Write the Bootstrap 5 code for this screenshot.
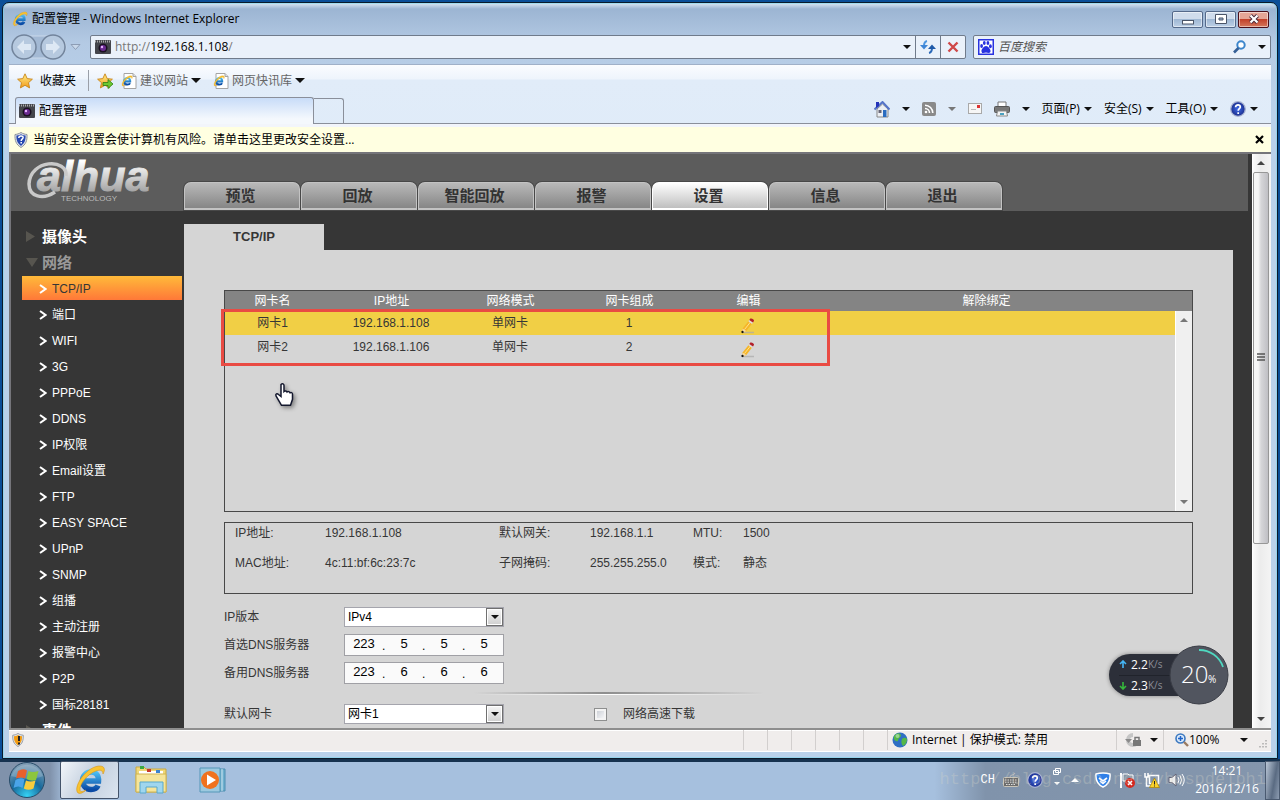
<!DOCTYPE html>
<html lang="zh-CN">
<head>
<meta charset="utf-8">
<meta name="viewport" content="width=device-width, initial-scale=1">
<title>配置管理 - Windows Internet Explorer</title>
<link href="https://cdn.jsdelivr.net/npm/bootstrap@5.3.0/dist/css/bootstrap.min.css" rel="stylesheet">
<style>
:root{--ui:"Open Sans","Noto Sans CJK SC",sans-serif;--web:"Liberation Sans","Noto Sans CJK SC",sans-serif}
body{height:100vh;min-height:600px;background:#0a4e98;font:12px/18px var(--ui);color:#000;overflow:hidden}
button{border:0;background:none;padding:0;color:inherit;font:inherit;white-space:nowrap}
a{color:inherit;text-decoration:none}
svg{display:block;flex:none}
input,select{font:inherit;color:inherit;min-width:0}
ul,dl,dd,dt{margin:0;padding:0;list-style:none;font-weight:400}
/* window chrome */
.win{min-height:0;margin:2px 2px 0;border:1px solid #0b1a2a;border-radius:7px 7px 0 0;padding:0 6px 6px;background:linear-gradient(#dbe7f4 0,#9cb5d3 6px,#b4cae4 40px,#b9d1ea 100px);box-shadow:inset 0 0 0 1px #6fd6ee80}
.titlebar{height:33px;padding:0 2px 0 3px}
.winbtns{gap:2px}
.winbtn{width:31px;height:17px;border:1px solid #54698a;border-radius:2px;background:linear-gradient(#cfdcec 45%,#9fb8d4 50%,#bdd0e6);box-shadow:inset 0 0 0 1px #ffffff80}
.winbtn.closer{border-color:#4b0f1a;background:linear-gradient(#e5a596 45%,#c2412a 50%,#d4775c)}
.addr{height:24px;margin-bottom:5px;gap:7px}
.field{height:24px;border:1px solid #707b8b;background:#eaf1fa;border-radius:2px}
.field input{border:0;background:none;outline:0;padding:0}
.field input::placeholder{color:#555;font-style:italic;opacity:1}
.search{width:298px}
.grey{color:#777}
.fieldbtn{width:25px;height:22px;border-left:1px solid #707b8b}
.arrow{width:0;height:0;border:5px solid transparent;border-top-color:#111;border-bottom:0;flex:none}
.arrow.sm{border-width:4px 4px 0}
.arrow.dim{border-top-color:#777}
.bars{background:linear-gradient(#fafcff 0,#eef4fc 14px,#e1ecf9 15px,#dfebf8 100%);border-top:1px solid #9fb0c8}
.favs{height:31px;padding-left:8px;gap:8px;color:#666}
.favs button{display:flex;align-items:center;gap:3px}
.vline{width:1px;height:21px;background:#9a9fa8;margin-left:4px}
.tabs{height:28px;border-bottom:1px solid #8a8f9a;padding-left:6px}
.pagetab{width:299px;height:27px;border:1px solid #8a8f9a;border-bottom:0;border-radius:3px 3px 0 0;background:linear-gradient(#c8dcf8,#f4f8fd 80%);padding-left:3px;margin-bottom:-1px}
.newtab{width:30px;height:25px;border:1px solid #8a8f9a;border-left:0;border-bottom:0;border-radius:0 3px 0 0}
.cmds{gap:12px;padding:0 13px 5px 0}
.infobar{height:28px;border-top:3px solid #f2f5fb;background:#ffffe1;padding:0 7px 0 4px}
/* camera web page */
.web{border:solid #75757a;border-width:2px 0 0 2px;background:#363636;font:12px/18px var(--web);color:#363636;overflow:hidden;min-height:0}
.head{background:#5c5c5c;height:57px;padding:0 0 1px 13px;margin-right:4px}
.brand{width:160px}
.brand svg{overflow:visible}
.maintab{width:116px;height:28px;margin-right:1px;padding-right:3px;border:1px solid #c3c3c3;border-bottom-width:2px;border-radius:7px 7px 0 0;background:linear-gradient(#b9b9b9,#868686);font-size:15px;font-weight:700;color:#333;box-shadow:0 0 0 1px #484848}
.maintab.current{background:linear-gradient(#fff,#bfbfbf);border-color:#fff}
.side{width:173px;flex:none;padding:13px 2px 0 11px;color:#fff}
.side li a{display:flex;align-items:center;height:24px;margin-bottom:2px;padding:1px 0 0 17px;gap:5px}
.side li.group a{font-size:15px;font-weight:700;padding-left:4px;gap:6px}
.side li.group svg{width:10px}
.side li.group.open a{color:#999}
.side li.current a{background:linear-gradient(#ffba3a,#ff7838);color:#363636}
.sub{padding-top:13px}
.subtab{width:140px;height:26px;background:#d5d5d5;font-size:13px;font-weight:700}
.panel{background:#d5d5d5;margin-right:19px;padding:40px 40px 0}
.boxed{border:1px solid #484848}
.nics{width:100%;table-layout:fixed;text-align:center}
.nics col{width:119px}
.nics .c1{width:107px}.nics .c6{width:auto}.nics .c7{width:17px}
.nics th{background:#848484;color:#fff;font-weight:400;height:20px;line-height:20px;padding:0}
.nics td{height:24px;line-height:24px;padding:0 1px 0 0;vertical-align:top}
.nics th:first-child,.nics td:first-child{padding-right:12px}
.nics th.last{padding-right:10px}
.nics tr.on td{background:#f1cf45}
.nics tr.rest td{height:152px}
.nics td button{display:block;margin:0 auto;padding-top:5px;height:24px}
.nics td.bar,.nics tr.on td.bar{background:#f0f0f0;padding:0;border-left:1px solid #fff;height:200px}
.bar>div{height:200px;padding:7px 0}
.redbox{left:-4px;top:18px;width:609px;height:57px;border:3px solid #e94b43;pointer-events:none}
.hand{left:49px;top:91px;filter:drop-shadow(2px 2px 2px #0006)}
.details{grid-template-columns:90px 174px 91px 103px 50px 1fr;row-gap:12px;padding:1px 10px 21px;margin:10px 0 12px}
.row-line{display:flex;height:22px;align-items:center;margin-bottom:6px}
.row-line>label:first-child{width:120px}
.pick{width:160px;height:20px;background:#fff;border:1px solid #a5a5ad;color:#000}
.pick select{appearance:none;border:0;background:none;padding:0 3px;outline:0;flex:1}
.pick .drop{width:17px;border:1px solid #707070;background:linear-gradient(#f6f6f6,#cfcfcf);box-shadow:inset 0 0 0 1px #fff}
.ipbox{width:160px;height:22px;border:1px solid #a0a0a5;background:#fafafa;color:#000;padding:0 1px}
.ipbox input{width:36px;height:18px;border:0;background:none;padding:0;text-align:center;font-size:13px;outline:0}
.ipbox span{width:4px;line-height:22px}
.fade-line{width:290px;height:3px;margin:8px 0 8px 250px;background:linear-gradient(90deg,transparent,#8e8e8e 45%,transparent) top/100% 2px no-repeat,linear-gradient(90deg,transparent,#fff 45%,transparent) bottom/100% 1px no-repeat}
.tick{appearance:none;width:13px;height:13px;border:1px solid #8e8f8f;background:linear-gradient(135deg,#c3c8cf,#fff);box-shadow:inset 0 0 0 2px #f4f4f4;margin:0 0 0 90px}
.sbar{width:19px;padding-right:2px;background:linear-gradient(90deg,#fafafa,#ececec 40%,#f4f4f4);border-left:1px solid #fff;flex:none}
.sbar .thumb{flex:374;border:1px solid #979797;border-radius:2px;background:linear-gradient(90deg,#f6f6f6 0 30%,#d6d6d9 50%,#bfbfc4)}
.sbar .room{flex:168}
.sbar button{height:18px}
.up{width:0;height:0;border:4px solid transparent;border-bottom-color:#444;border-top:0}
.down{width:0;height:0;border:4px solid transparent;border-top-color:#444;border-bottom:0}
.up.light{border-bottom-color:#fff}
.faint{opacity:.7}
.meter{right:42px;bottom:23px;font-family:"Open Sans",sans-serif;color:#fff}
.pill{width:80px;height:42px;border-radius:21px 0 0 21px;background:#2c2f39;margin-right:-20px;padding-left:10px;line-height:21px;font-size:12px;box-shadow:0 0 4px #0006}
.pill div{height:21px}
.pill div+div{border-top:1px solid #20232b}
.pill small{color:#8b8e97;font-size:10px}
.dial{width:60px;height:60px}
/* status bar */
.status{height:25px;border-top:2px solid #8e8e8e;box-shadow:inset 0 1px #fff;background:#f0edec;padding-left:3px;border-bottom:1px solid #fff}
.seg{border-left:1px solid #d2cfce;height:20px;width:24px}
.seg.zone{width:229px}.seg.lock{width:47px}.seg.zoom{width:108px;padding-left:11px}
/* taskbar */
.taskbar{height:42px;padding-top:2px;background:linear-gradient(90deg,#8092ab 0 50px,#a6c0de 66px,#a6c0de 73%,#8093ab 77%,#8496ad);background-clip:content-box;box-shadow:inset 0 3px #16324f;color:#fff}
.orb{padding:0 14px 0 8px}
.iebtn{width:59px;height:38px;border:1px solid #43536a;border-radius:2px;background:linear-gradient(120deg,#f2f6fa,#c3cfde 50%,#dbe5f0);margin-right:16px}
.media{margin-left:31px}
.ch{font-family:"Liberation Mono",monospace}
.peek{width:15px;border:1px solid #4a5a70;background:linear-gradient(100deg,#b9c6d6,#5a6b82 60%,#8c9cb1)}
.stamp{right:14px;bottom:7px;font:17px/26px "Liberation Mono",monospace;color:#d4d4c850;pointer-events:none;white-space:nowrap}
.clock{width:76px;line-height:18px;text-align:center}
</style>
</head>
<body class="d-flex flex-column">
<svg width="0" height="0" class="position-absolute" aria-hidden="true">
<defs>
<linearGradient id="gBlue" x1="0" y1="0" x2="0" y2="1"><stop offset="0" stop-color="#4cc0f5"/><stop offset="1" stop-color="#0a4aa5"/></linearGradient>
<linearGradient id="gStar" x1="0" y1="0" x2="0" y2="1"><stop offset="0" stop-color="#fff08a"/><stop offset="1" stop-color="#f29a1a"/></linearGradient>
<linearGradient id="gLogo" x1="0" y1="0" x2="0" y2="1"><stop offset=".2" stop-color="#fff"/><stop offset=".8" stop-color="#a8a8a8"/></linearGradient>
<radialGradient id="gHelp"><stop offset="0" stop-color="#3f6be8"/><stop offset="1" stop-color="#1a2d8c"/></radialGradient>
<radialGradient id="gOrb" cx=".5" cy=".95" r=".9"><stop offset="0" stop-color="#35d2f5"/><stop offset=".5" stop-color="#176a9c"/><stop offset="1" stop-color="#7f9db5"/></radialGradient>
<symbol id="ie" viewBox="0 0 32 32"><path d="M9.500 17h15c.5-6-3-9-7.500-9s-8.500 3.500-8.500 8.500 3.500 9 8.500 9c3.500 0 6-1.500 7-4" fill="none" stroke="url(#gBlue)" stroke-width="5.500"/><path d="M4 29C0 25 6 13 14 7 21 1 29 1 30 4c1 2 0 4-1 6 0-3-2-5-7-3C13 10 5 21 6 26c0 2 3 2 6 0-3 3-6 4-8 3z" fill="#f7c331" stroke="#d9951a" stroke-width=".6"/></symbol>
<symbol id="cam" viewBox="0 0 16 14"><rect width="16" height="14" rx="1" fill="#44454b"/><path d="M0 1.500h16" stroke="#aaa" stroke-width="2" stroke-dasharray="1 1"/><circle cx="8" cy="8" r="4.500" fill="#1a1020"/><circle cx="8" cy="8" r="3" fill="#6a2a90"/><circle cx="7" cy="7" r="1.200" fill="#e6b4ff"/></symbol>
<symbol id="star" viewBox="0 0 16 16"><path d="M8 .800l2.200 4.800 5.200.600-3.900 3.500 1.100 5.200L8 12.300l-4.600 2.600 1.100-5.200L.600 6.200l5.200-.600z" fill="url(#gStar)" stroke="#c8841a" stroke-width=".9"/></symbol>
<symbol id="iepage" viewBox="0 0 16 16"><path d="M3 .500h9l3 3v12H3z" fill="#fff" stroke="#a4a4a4"/><path d="M12 .500v3h3" fill="#ddd" stroke="#a4a4a4"/><use href="#ie" x="0" y="2" width="12" height="12"/></symbol>
<symbol id="help" viewBox="0 0 16 16"><circle cx="8" cy="8" r="7.300" fill="url(#gHelp)" stroke="#a9b3d2" stroke-width="1.300"/><path d="M5.600 6.300c0-3.300 5-3 4.700-.200C10.100 7.600 8.200 7.700 8.200 9.800M8.200 11.200v1.800" fill="none" stroke="#fff" stroke-width="1.700"/></symbol>
<symbol id="shield" viewBox="0 0 16 16"><path d="M8 .500c2 1.300 4 1.800 6 2 .300 6-1 10-6 13-5-3-6.300-7-6-13 2-.200 4-.700 6-2z" fill="#dfe3ea" stroke="#8d939c"/><path d="M8 2.200c1.500.900 3 1.300 4.600 1.400.100 5-1 7.800-4.600 10.300C4.400 11.400 3.300 8.600 3.400 3.600 5 3.500 6.500 3.100 8 2.200z" fill="currentColor"/></symbol>
<symbol id="chev" viewBox="0 0 8 10"><path d="M1 1l5.500 4L1 9" fill="none" stroke="currentColor" stroke-width="2"/></symbol>
<symbol id="pencil" viewBox="0 0 14 16"><path d="M2 14.500h11" stroke="#aaa" stroke-width="1.500" opacity=".7"/><path d="M1.500 10.500l6.500-8 3.500 2.500-6.200 8-4 1.700z" fill="#f5b52a"/><path d="M3.500 11.500l6-7.500" stroke="#ffe38a"/><path d="M1.500 10.500l3.800 2.500-4 1.700z" fill="#f3d9a8"/><path d="M1 13l1.500 1-1.500.900z" fill="#111" stroke="#111"/><path d="M7.300 3.300l1-1.300 3.700 2.500-1 1.400z" fill="#ddd"/><path d="M8.300 2l1-1.400c1.500-.800 4 .800 3.700 2.200L12 4.500z" fill="#b3202a"/></symbol>
</defs>
</svg>

<div class="win d-flex flex-column flex-grow-1">
  <header class="titlebar d-flex align-items-center">
    <svg width="16" height="16"><use href="#ie"/></svg>
    <span class="ms-1 flex-grow-1">配置管理 - Windows Internet Explorer</span>
    <div class="winbtns d-flex">
      <button class="winbtn d-flex justify-content-center align-items-center" aria-label="最小化"><svg width="12" height="12"><rect x=".5" y="7.500" width="11" height="3.500" fill="#fff" stroke="#4a5568"/></svg></button>
      <button class="winbtn d-flex justify-content-center align-items-center" aria-label="还原"><svg width="12" height="12"><path d="M.5 1.500h11v9H.5z" fill="#fff" stroke="#4a5568"/><path d="M4 5h4v2H4z" fill="#9fb8d4" stroke="#4a5568"/></svg></button>
      <button class="winbtn closer d-flex justify-content-center align-items-center" aria-label="关闭"><svg width="12" height="12"><path d="M2.500 2.500l7 7m0-7l-7 7" stroke="#4a2a3a" stroke-width="4"/><path d="M2.500 2.500l7 7m0-7l-7 7" stroke="#fff" stroke-width="2.200"/></svg></button>
    </div>
  </header>

  <div class="addr d-flex align-items-center">
    <svg width="74" height="28" viewBox="0 0 74 28"><rect x="5" y="3" width="52" height="22" rx="11" fill="#a3b9d4" stroke="#c9d8ea"/><g fill="#b6c9df" stroke="#72849c" stroke-width="1.500"><circle cx="15" cy="14" r="12"/><circle cx="44" cy="14" r="12"/></g><g fill="#dde8f4"><path d="M8 14l7-7v4h7v6h-7v4zM51 14l-7-7v4h-7v6h7v4z"/></g><path d="M62 11.500h9l-4.500 5z" fill="#c9d8ea" stroke="#8d9db5"/></svg>
    <div class="field d-flex align-items-center flex-grow-1 ps-1">
      <svg width="16" height="14" class="me-1"><use href="#cam"/></svg>
      <a href="#" class="flex-grow-1"><span class="grey">http://</span>192.168.1.108<span class="grey">/</span></a>
      <i class="arrow sm me-1"></i>
      <button class="fieldbtn d-flex justify-content-center align-items-center" aria-label="刷新"><svg width="16" height="16"><path d="M7 2C4.500 2.500 4 4 4 7" fill="none" stroke="#4d95e0" stroke-width="2"/><path d="M0 6h8l-4 4.500z" fill="#3f86d6"/><path d="M9 14c2.500-.5 3-2 3-5" fill="none" stroke="#2c69b8" stroke-width="2"/><path d="M8 10h8l-4-4.500z" fill="#205aa8"/></svg></button>
      <button class="fieldbtn d-flex justify-content-center align-items-center" aria-label="停止"><svg width="12" height="12"><path d="M1.500 1.500l9 9m0-9l-9 9" stroke="#cf4848" stroke-width="2.400"/></svg></button>
    </div>
    <div class="field search d-flex align-items-center ps-1">
      <svg width="16" height="16" class="me-1"><rect x=".75" y=".75" width="14.500" height="14.500" fill="#fff" stroke="#2832e0" stroke-width="1.500"/><g fill="#2832e0"><ellipse cx="3.600" cy="7" rx="1.400" ry="2"/><ellipse cx="6.300" cy="4" rx="1.400" ry="2"/><ellipse cx="9.900" cy="4" rx="1.400" ry="2"/><ellipse cx="12.400" cy="7.200" rx="1.400" ry="2"/><path d="M8 7c2 0 5 3.500 4.500 5.500S10 14 8 13.500C6 14 4 14.500 3.500 12.500S6 7 8 7z"/></g></svg>
      <input type="text" class="flex-grow-1" placeholder="百度搜索" aria-label="百度搜索">
      <svg width="14" height="14" class="me-2"><circle cx="9" cy="5" r="3.700" fill="#fff" stroke="#3c86cc" stroke-width="2"/><path d="M6.500 8L2 12.500" stroke="#355f96" stroke-width="2.600"/></svg>
      <i class="arrow sm mx-1"></i>
    </div>
  </div>

  <div class="bars">
    <nav class="favs d-flex align-items-center">
      <button class="text-black"><svg width="16" height="16"><use href="#star"/></svg><span class="ms-1">收藏夹</span></button>
      <span class="vline"></span>
      <button aria-label="添加到收藏夹栏"><svg width="16" height="16"><use href="#star"/><path d="M6 9.500h5v-3l5 4.500-5 4.500v-3H6z" fill="#6cc832" stroke="#2d7d12" stroke-width=".8"/></svg></button>
      <button class="me-1"><svg width="16" height="16"><use href="#iepage"/></svg>建议网站 <i class="arrow"></i></button>
      <button><svg width="16" height="16"><use href="#iepage"/></svg>网页快讯库 <i class="arrow"></i></button>
    </nav>
    <div class="tabs d-flex align-items-end">
      <button class="pagetab d-flex align-items-center gap-1"><svg width="16" height="14"><use href="#cam"/></svg>配置管理</button>
      <button class="newtab" aria-label="新选项卡"></button>
      <div class="cmds d-flex align-items-center ms-auto">
        <svg width="16" height="17"><path d="M3 8v8h11V8L8.500 3z" fill="#eceff4" stroke="#888"/><path d="M.5 8.500L8.500 1l7 7.500" fill="none" stroke="#5674c8" stroke-width="2"/><path d="M2 1h3v4L2 7z" fill="#2433b8"/><path d="M9 9h3.500v7H9z" fill="#2a6cc0"/><path d="M4.500 9h3v3h-3z" fill="#667"/></svg>
        <i class="arrow sm"></i>
        <svg width="14" height="14"><rect width="14" height="14" rx="2" fill="#8a8a8a"/><g fill="none" stroke="#fff" stroke-width="1.600"><path d="M3 6.500A4.500 4.500 0 017.500 11M3 3.200A7.800 7.800 0 0110.800 11"/></g><circle cx="4" cy="10" r="1.300" fill="#fff"/></svg>
        <i class="arrow sm dim"></i>
        <svg width="14" height="12"><rect x=".5" y=".5" width="13" height="10" fill="#f6f6f6" stroke="#a9a9a9"/><rect x="9" y="2" width="3" height="3" fill="#d33"/><path d="M3 6.500h5" stroke="#bbb"/></svg>
        <svg width="16" height="16"><path d="M4 1h8v5H4z" fill="#fff" stroke="#777"/><rect x=".5" y="5.500" width="15" height="6" rx="1" fill="#777" stroke="#555"/><path d="M3.500 10h9l1 5h-11z" fill="#f4f4f4" stroke="#888"/><path d="M6 12h4v2H6z" fill="#49a0c0"/></svg>
        <i class="arrow sm"></i>
        <button class="d-flex align-items-center gap-1">页面(P) <i class="arrow sm"></i></button>
        <button class="d-flex align-items-center gap-1">安全(S) <i class="arrow sm"></i></button>
        <button class="d-flex align-items-center gap-1">工具(O) <i class="arrow sm"></i></button>
        <button class="d-flex align-items-center gap-1" aria-label="帮助"><svg width="16" height="16"><use href="#help"/></svg><i class="arrow sm"></i></button>
      </div>
    </div>
    <div class="infobar d-flex align-items-center">
      <svg width="16" height="16" class="me-1" color="#2648b0"><use href="#shield"/><path d="M5.800 6c.200-3 4.600-2.500 4.300-.2C10 7 8.200 7 8.200 9M8.200 10v1.600" fill="none" stroke="#fff" stroke-width="1.500"/></svg>
      <span class="flex-grow-1">当前安全设置会使计算机有风险。请单击这里更改安全设置...</span>
      <button aria-label="关闭信息栏"><svg width="9" height="9"><path d="M1 1l7 7m0-7l-7 7" stroke="#000" stroke-width="2.200"/></svg></button>
    </div>
  </div>

  <div class="web d-flex flex-grow-1 position-relative">
    <div class="flex-grow-1 overflow-hidden">
      <div class="head d-flex">
        <a href="#" class="brand" aria-label="alhua TECHNOLOGY">
          <svg width="136" height="54"><text x="13" y="37" font-family="Liberation Sans" font-style="italic" font-weight="700" font-size="43" fill="url(#gLogo)" stroke="url(#gLogo)">alhua</text><path d="M42 22C44 4 6 5 5 30c0 13 14 16 26 8" fill="none" stroke="#c9c9c9" stroke-width="3.500"/><text x="37" y="47" font-family="Liberation Sans" font-size="8" fill="#bbb">TECHNOLOGY</text></svg>
        </a>
        <nav class="d-flex align-items-end">
          <button class="maintab">预览</button><button class="maintab">回放</button><button class="maintab">智能回放</button><button class="maintab">报警</button><button class="maintab current">设置</button><button class="maintab">信息</button><button class="maintab">退出</button>
        </nav>
      </div>
      <div class="d-flex">
        <ul class="side">
          <li class="group"><a href="#"><svg width="10" height="11"><path d="M0 0l9 5.500L0 11z" fill="#57554f"/></svg>摄像头</a></li>
          <li class="group open"><a href="#"><svg width="10" height="9" overflow="visible"><path d="M0 0h12L6 9z" fill="#57554f"/></svg>网络</a></li>
          <li class="current"><a href="#"><svg width="8" height="10" color="#fff"><use href="#chev"/></svg>TCP/IP</a></li>
          <li><a href="#"><svg width="8" height="10"><use href="#chev"/></svg>端口</a></li>
          <li><a href="#"><svg width="8" height="10"><use href="#chev"/></svg>WIFI</a></li>
          <li><a href="#"><svg width="8" height="10"><use href="#chev"/></svg>3G</a></li>
          <li><a href="#"><svg width="8" height="10"><use href="#chev"/></svg>PPPoE</a></li>
          <li><a href="#"><svg width="8" height="10"><use href="#chev"/></svg>DDNS</a></li>
          <li><a href="#"><svg width="8" height="10"><use href="#chev"/></svg>IP权限</a></li>
          <li><a href="#"><svg width="8" height="10"><use href="#chev"/></svg>Email设置</a></li>
          <li><a href="#"><svg width="8" height="10"><use href="#chev"/></svg>FTP</a></li>
          <li><a href="#"><svg width="8" height="10"><use href="#chev"/></svg>EASY SPACE</a></li>
          <li><a href="#"><svg width="8" height="10"><use href="#chev"/></svg>UPnP</a></li>
          <li><a href="#"><svg width="8" height="10"><use href="#chev"/></svg>SNMP</a></li>
          <li><a href="#"><svg width="8" height="10"><use href="#chev"/></svg>组播</a></li>
          <li><a href="#"><svg width="8" height="10"><use href="#chev"/></svg>主动注册</a></li>
          <li><a href="#"><svg width="8" height="10"><use href="#chev"/></svg>报警中心</a></li>
          <li><a href="#"><svg width="8" height="10"><use href="#chev"/></svg>P2P</a></li>
          <li><a href="#"><svg width="8" height="10"><use href="#chev"/></svg>国标28181</a></li>
          <li class="group"><a href="#"><svg width="10" height="11"><path d="M0 0l9 5.500L0 11z" fill="#57554f"/></svg>事件</a></li>
        </ul>
        <main class="sub flex-grow-1 d-flex flex-column">
          <button class="subtab">TCP/IP</button>
          <div class="panel flex-grow-1">
            <div class="boxed position-relative">
              <table class="nics">
                <colgroup><col class="c1"><col><col><col><col><col class="c6"><col class="c7"></colgroup>
                <thead><tr><th>网卡名</th><th>IP地址</th><th>网络模式</th><th>网卡组成</th><th>编辑</th><th class="last">解除绑定</th><th></th></tr></thead>
                <tbody>
                  <tr class="on"><td>网卡1</td><td>192.168.1.108</td><td>单网卡</td><td>1</td><td><button aria-label="编辑网卡1"><svg width="14" height="16"><use href="#pencil"/></svg></button></td><td></td>
                    <td class="bar" rowspan="3"><div class="d-flex flex-column justify-content-between align-items-center"><i class="up faint"></i><i class="down faint"></i></div></td></tr>
                  <tr><td>网卡2</td><td>192.168.1.106</td><td>单网卡</td><td>2</td><td><button aria-label="编辑网卡2"><svg width="14" height="16"><use href="#pencil"/></svg></button></td><td></td></tr>
                  <tr class="rest"><td colspan="6"></td></tr>
                </tbody>
              </table>
              <div class="redbox position-absolute"></div>
              <svg class="hand position-absolute" width="22" height="26" viewBox="0 0 22 26"><path d="M7 2.500c1.500-1.500 3-.5 3 1v6c1-1 2.500-.5 3 .5 1-1 2.500-.3 3 .8 1.500-.8 2.500.2 2.500 1.500v5l-2 6H7.500L2 14c-.8-2 1-3 2.500-1.500L7 14.500z" fill="#fff" stroke="#14182e" stroke-width="1.500"/></svg>
            </div>
            <dl class="details boxed d-grid">
              <dt>IP地址:</dt><dd>192.168.1.108</dd><dt>默认网关:</dt><dd>192.168.1.1</dd><dt>MTU:</dt><dd>1500</dd>
              <dt>MAC地址:</dt><dd>4c:11:bf:6c:23:7c</dd><dt>子网掩码:</dt><dd>255.255.255.0</dd><dt>模式:</dt><dd>静态</dd>
            </dl>
            <form>
              <div class="row-line"><label for="ver">IP版本</label><div class="pick d-flex"><select id="ver"><option>IPv4</option></select><span class="drop d-flex align-items-center justify-content-center"><i class="arrow sm"></i></span></div></div>
              <div class="row-line"><label for="dns1">首选DNS服务器</label><div class="ipbox d-flex"><input id="dns1" value="223"><span>.</span><input value="5" aria-label="首选DNS第二段"><span>.</span><input value="5" aria-label="首选DNS第三段"><span>.</span><input value="5" aria-label="首选DNS第四段"></div></div>
              <div class="row-line"><label for="dns2">备用DNS服务器</label><div class="ipbox d-flex"><input id="dns2" value="223"><span>.</span><input value="6" aria-label="备用DNS第二段"><span>.</span><input value="6" aria-label="备用DNS第三段"><span>.</span><input value="6" aria-label="备用DNS第四段"></div></div>
              <div class="fade-line"></div>
              <div class="row-line"><label for="nic">默认网卡</label><div class="pick d-flex"><select id="nic"><option>网卡1</option></select><span class="drop d-flex align-items-center justify-content-center"><i class="arrow sm"></i></span></div>
                <input type="checkbox" class="tick" id="fast"><label for="fast" class="ms-3">网络高速下载</label></div>
            </form>
          </div>
        </main>
      </div>
    </div>
    <div class="sbar d-flex flex-column">
      <button class="d-flex justify-content-center align-items-center" aria-label="向上滚动"><i class="up"></i></button>
      <div class="thumb d-flex align-items-center justify-content-center"><svg width="8" height="9"><path d="M0 1h8M0 4h8M0 7h8" stroke="#555" stroke-width="1.500"/></svg></div>
      <div class="room"></div>
      <button class="d-flex justify-content-center align-items-center" aria-label="向下滚动"><i class="down"></i></button>
    </div>
    <div class="meter position-absolute d-flex align-items-center">
      <div class="pill">
        <div class="d-flex align-items-center"><svg width="8" height="8" class="me-1"><path d="M4 8V1M1 4l3-3 3 3" fill="none" stroke="#45b6f5" stroke-width="1.600"/></svg>2.2<small>K/s</small></div>
        <div class="d-flex align-items-center"><svg width="8" height="8" class="me-1"><path d="M4 0v7M1 4l3 3 3-3" fill="none" stroke="#36b93c" stroke-width="1.600"/></svg>2.3<small>K/s</small></div>
      </div>
      <svg class="dial" viewBox="0 0 60 60"><circle cx="30" cy="30" r="29" fill="#51555f" stroke="#3a3d46"/><path d="M30 5a25 25 0 0124 17" fill="none" stroke="#4fd8c0" stroke-width="1.800"/><text x="12" y="38" font-size="24" font-weight="300" fill="#fff" font-family="Open Sans">20</text><text x="39" y="38" font-size="10" fill="#fff" font-family="Open Sans">%</text></svg>
    </div>
  </div>

  <footer class="status d-flex align-items-center">
    <svg width="14" height="16" viewBox="1 0 14 16" class="me-auto" color="#f39c12"><use href="#shield"/><path d="M8 4v5M8 10.500v2" stroke="#222" stroke-width="2"/></svg>
    <span class="seg"></span><span class="seg"></span><span class="seg"></span><span class="seg"></span><span class="seg"></span><span class="seg"></span>
    <span class="seg zone d-flex align-items-center ps-1"><svg width="16" height="16" class="me-1"><circle cx="8" cy="8" r="7.500" fill="#2f6fc4"/><path d="M2 4c3-4 6-3 7-1 0 3-3 3-3 6-3 1-5-2-4-5zM10 7c2-2 4-1 5 0 0 4-2 6-4 7-2-2-2-5-1-7z" fill="#54b848"/><circle cx="5.500" cy="4" r="2" fill="#fff" opacity=".4"/></svg>Internet | 保护模式: 禁用</span>
    <span class="seg lock d-flex align-items-center ps-2"><svg width="17" height="16" class="me-2"><path d="M8 1a7 7 0 107 7h-4A3 3 0 118 5z" fill="#c5c5c5"/><path d="M0 7h7L3.500 11z" fill="#8a8a8a"/><rect x="8" y="8" width="8" height="6" fill="#777"/><path d="M10 8V5.500h4V8" fill="none" stroke="#777" stroke-width="1.500"/></svg><i class="arrow sm"></i></span>
    <span class="seg zoom d-flex align-items-center"><svg width="14" height="14"><circle cx="5.500" cy="5.500" r="4.500" fill="#dceafa" stroke="#3b78c0" stroke-width="1.600"/><path d="M5.500 3v5M3 5.500h5" stroke="#1e63c8" stroke-width="1.500"/><path d="M9 9l4 4" stroke="#9a7a60" stroke-width="2.400"/></svg><span class="me-1">100%</span><i class="arrow sm ms-3"></i><svg width="10" height="10" class="ms-auto mt-2 me-1"><path d="M9 1v9M6 4v6M3 7v3" stroke="#aaa" stroke-width="1.500" stroke-dasharray="1.500 1.500"/></svg></span>
  </footer>
</div>

<div class="taskbar d-flex position-relative">
  <button class="orb" aria-label="开始"><svg width="38" height="38"><circle cx="19" cy="19" r="17.500" fill="url(#gOrb)" stroke="#274b68"/><path d="M3 15a17 17 0 0132 0c-9 4-22 3-32 0z" fill="#fff" opacity=".2"/><path d="M10 10q5-3 9-.500l-2 8q-4-2-9 0z" fill="#e8602c"/><path d="M20.500 10q4 2 10 0l-2.500 9q-4.500 2-9.500-1z" fill="#8cc63e"/><path d="M7.500 19q5-3 9-.500l-2 8.500q-4-3-9 0z" fill="#4aa4e8"/><path d="M18 19.500q4 2 9.500 0l-2 8q-5 2.500-9.700 0z" fill="#f8cc3c"/></svg></button>
  <button class="iebtn d-flex justify-content-center align-items-center" aria-label="Internet Explorer"><svg width="32" height="32"><use href="#ie"/></svg></button>
  <button aria-label="资源管理器"><svg width="33" height="30"><path d="M1 2h8l2 2h20v23H1z" fill="#f0d878" stroke="#c9a942"/><path d="M4 6h24v5H4z" fill="#fff"/><path d="M5 1h4v3H5z" fill="#39a845"/><path d="M12 4h4v3h-4z" fill="#c83a2c"/><path d="M21 5h4v3h-4z" fill="#3c84d0"/><path d="M1 9h30v18H1z" fill="#f6e59a" stroke="#d0b450"/><path d="M5 28V17h23v11h-6v-6H11v6z" fill="#9fd6ee" stroke="#58a8cc"/></svg></button>
  <button class="media" aria-label="媒体播放器"><svg width="28" height="28"><path d="M6 3h20v22H6z" fill="#6fb0cf" stroke="#4d8eb0"/><path d="M1 2h20v24H1z" fill="#9cc9df" stroke="#5597b8"/><path d="M23 3v22" stroke="#cfe6f1"/><circle cx="11" cy="14" r="9" fill="#f0721e"/><path d="M8 8.500l9 5.500-9 5.500z" fill="#fff"/></svg></button>
  <div class="d-flex align-items-center ms-auto">
    <span class="ch me-2">CH</span>
    <svg width="16" height="14" class="me-1"><rect x=".5" y="4.500" width="15" height="9" rx="1" fill="#6c6c6c" stroke="#c9c4b8"/><path d="M2 7h12M2 9.200h12M3 11.500h10" stroke="#ddd" stroke-dasharray="1.500 1"/><path d="M7 4c0-3 4-1 5-4" fill="none" stroke="#bbb"/></svg>
    <svg width="16" height="16" class="ms-1 me-2"><use href="#help"/></svg>
    <svg width="12" height="22" class="me-2 mb-2"><path d="M4.500 3.500h5v4h-5zM2.500 5.500h5v4h-5z" fill="#8496ad" stroke="#fff"/><path d="M3 17h6l-3 3z" fill="#fff"/></svg>
    <i class="up light me-3"></i>
    <svg width="16" height="16" class="me-2"><path d="M1 2q7-2 14 0 1 9-7 13Q0 11 1 2z" fill="#2f80e8" stroke="#fff" stroke-width="1.500"/><path d="M4 6l4 3 4-3M5 9l3 2.500L11 9" fill="none" stroke="#fff" stroke-width="1.600"/></svg>
    <svg width="17" height="17" class="me-2"><path d="M2 1v15" stroke="#fff" stroke-width="2"/><path d="M4 2h5l1 1h4v6H4z" fill="#8794a5" stroke="#fff"/><circle cx="11" cy="11" r="5" fill="#d4281e"/><path d="M9 9l4 4m0-4l-4 4" stroke="#fff" stroke-width="1.600"/></svg>
    <svg width="16" height="17" class="me-2"><path d="M5.500 3.500h9v8h-9zM1 1v4h3V1M2.500 5v9H7" fill="none" stroke="#fff" stroke-width="1.500"/><path d="M10.500 6l5 9.500h-10z" fill="#fbd22c" stroke="#a98200" stroke-width=".7"/><path d="M10.500 9v3.500m0 1v1" stroke="#222"/></svg>
    <svg width="17" height="16" class="me-1"><path d="M1 5.500h3L8 2v12l-4-3.500H1z" fill="#eee" stroke="#667"/><path d="M10 5q2 3 0 6M12 3.500q3 4.500 0 9M14 2q4.500 6 0 12" fill="none" stroke="#fff"/></svg>
    <div class="clock">14:21<br>2016/12/16</div>
  </div>
  <button class="peek" aria-label="显示桌面"></button>
  <div class="stamp position-absolute">http://blog.csdn.net/vbaspdelphi</div>
</div>
<script src="https://cdn.jsdelivr.net/npm/bootstrap@5.3.0/dist/js/bootstrap.bundle.min.js"></script>
</body>
</html>
